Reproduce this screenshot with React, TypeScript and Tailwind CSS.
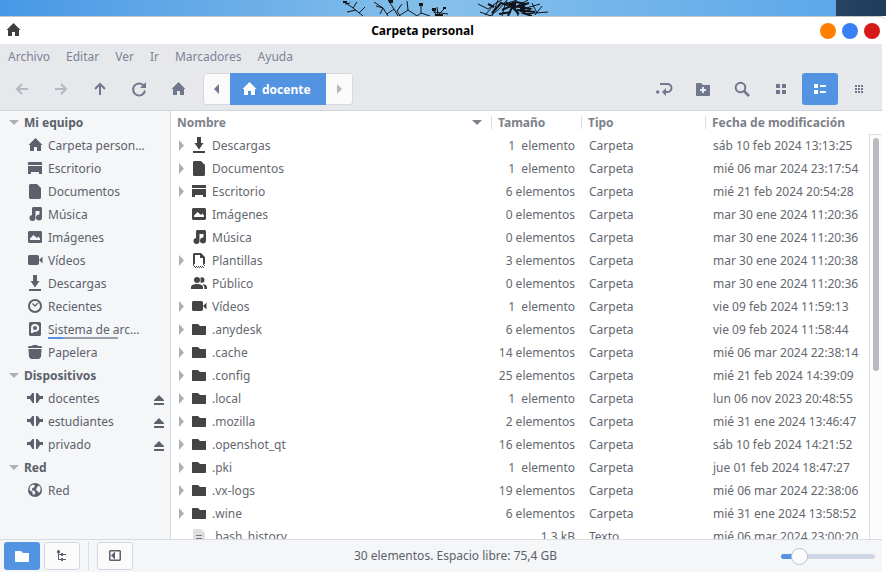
import React from "react";

type IconName =
  | "home" | "desktop" | "document" | "music" | "image" | "video" | "download"
  | "recent" | "disk" | "trash" | "share" | "globe" | "template" | "people"
  | "folder" | "text";

const shapes: Record<IconName, React.ReactNode> = {
  home: <path d="M8.500 1 15.500 8H14v6h-4v-4H7v4H3V8H1.500z" />,
  desktop: <path d="M1 2.500 1.500 2h13l.5.5V5H1zM1 6h14v8h-3v-2H4v2H1z" />,
  document: <path d="M3 1h7l4 4v10l-1 1H3l-1-1V2z" />,
  music: <path d="M5 2l1-1h8l1 1v9.500a3 3 0 1 1-2.500-3V5h-4v7a3 3 0 1 1-3.500-3z" />,
  image: <path fillRule="evenodd" d="M2 2h12l1 1v10l-1 1H2l-1-1V3zm1 9h10V9.500L11.500 7.500 10 9 6.500 6 3 9.500z" />,
  video: <path d="M2 3h8.500L12 4v8l-1.500 1H2l-1-1V4zM15.500 4.500v7L12 8z" />,
  download: <path d="M6 0h4v6h2.500L8 12.500 3.500 6H6zM2 14h12v2H2z" />,
  recent: (
    <>
      <circle cx="8" cy="8" r="6" fill="none" stroke="currentColor" strokeWidth="2" />
      <path d="M5.500 5.500 8 8l3-3" fill="none" stroke="currentColor" strokeWidth="1.300" />
    </>
  ),
  disk: <path fillRule="evenodd" d="M3 1h10l1 1v12l-1 1H3l-1-1V2zM8 3a4 4 0 0 0-4 4v5h2l1-1.200A4 4 0 1 0 8 3zm0 2a2 2 0 1 1 0 4 2 2 0 0 1 0-4z" />,
  trash: <path d="M1 3l1-1h3l1-1h4l1 1h3l1 1v1H1zM1.500 5h13L14 13l-2 2H4l-2-2z" />,
  share: <path d="M0 7h3l2.500-3H7v10H5.500L3 10H0zM9 4h1.500L13 7h3v3h-3l-2.500 4H9z" transform="translate(0 -1)" />,
  globe: (
    <>
      <circle cx="8" cy="8" r="7" />
      <path d="M3 4.500 6 2.500l2 1-1 2-2 1v2h2l1.500 2L7 13l-1.500-1v-2L2.500 8zM10 5l2-1.500 1.500 2v3L12 11l-1.500-2-1.500-1z" fill="#f5f6f8" />
    </>
  ),
  template: (
    <>
      <path fillRule="evenodd" d="M2 2l1-1h7l4 4v7h-2V6H9V3H4v9H2z" />
      <path d="M2 12.500h2M12 12.500h2M2 13.500h1M13 13.500h1M3 14.500h10M4 15.500h9" fill="none" stroke="currentColor" strokeDasharray="1 1" />
    </>
  ),
  people: (
    <>
      <circle cx="6" cy="5" r="3" />
      <path d="M9.500 2.500a2.800 2.800 0 1 1 0 5zM0 14v-2c0-2 3-3 6-3s6 1 6 3v2zM11.500 9c2.500.3 4.500 1.500 4.500 3v2h-2.500c0-2-.5-3.500-2-5z" />
    </>
  ),
  folder: <path d="M1.500 3H7l2 2h6v8.500l-.5.5h-13l-.5-.5v-10z" />,
  text: (
    <>
      <path d="M3 1h7l4 4v12H2V2z" fill="#e0e0e0" />
      <path d="M5 7h6v1H5zM5 10h6v1H5z" fill="#777" />
    </>
  ),
};

function Icon({ name }: { name: IconName }) {
  return (
    <svg className="h-[17px] w-4 shrink-0" viewBox="0 0 16 17" fill="currentColor" aria-hidden="true">
      {shapes[name]}
    </svg>
  );
}

interface Place {
  label: string;
  icon: IconName;
  eject?: boolean;
  usage?: boolean;
}

const sections: { title: string; places: Place[] }[] = [
  {
    title: "Mi equipo",
    places: [
      { label: "Carpeta person…", icon: "home" },
      { label: "Escritorio", icon: "desktop" },
      { label: "Documentos", icon: "document" },
      { label: "Música", icon: "music" },
      { label: "Imágenes", icon: "image" },
      { label: "Vídeos", icon: "video" },
      { label: "Descargas", icon: "download" },
      { label: "Recientes", icon: "recent" },
      { label: "Sistema de arc…", icon: "disk", usage: true },
      { label: "Papelera", icon: "trash" },
    ],
  },
  {
    title: "Dispositivos",
    places: [
      { label: "docentes", icon: "share", eject: true },
      { label: "estudiantes", icon: "share", eject: true },
      { label: "privado", icon: "share", eject: true },
    ],
  },
  { title: "Red", places: [{ label: "Red", icon: "globe" }] },
];

interface FileRow {
  name: string;
  icon: IconName;
  size: string;
  date: string;
  kind?: string;
  open?: boolean;
}

const files: FileRow[] = [
  { name: "Descargas", icon: "download", size: "1  elemento", date: "sáb 10 feb 2024 13:13:25", open: true },
  { name: "Documentos", icon: "document", size: "1  elemento", date: "mié 06 mar 2024 23:17:54", open: true },
  { name: "Escritorio", icon: "desktop", size: "6 elementos", date: "mié 21 feb 2024 20:54:28", open: true },
  { name: "Imágenes", icon: "image", size: "0 elementos", date: "mar 30 ene 2024 11:20:36" },
  { name: "Música", icon: "music", size: "0 elementos", date: "mar 30 ene 2024 11:20:36" },
  { name: "Plantillas", icon: "template", size: "3 elementos", date: "mar 30 ene 2024 11:20:38", open: true },
  { name: "Público", icon: "people", size: "0 elementos", date: "mar 30 ene 2024 11:20:36" },
  { name: "Vídeos", icon: "video", size: "1  elemento", date: "vie 09 feb 2024 11:59:13", open: true },
  { name: ".anydesk", icon: "folder", size: "6 elementos", date: "vie 09 feb 2024 11:58:44", open: true },
  { name: ".cache", icon: "folder", size: "14 elementos", date: "mié 06 mar 2024 22:38:14", open: true },
  { name: ".config", icon: "folder", size: "25 elementos", date: "mié 21 feb 2024 14:39:09", open: true },
  { name: ".local", icon: "folder", size: "1  elemento", date: "lun 06 nov 2023 20:48:55", open: true },
  { name: ".mozilla", icon: "folder", size: "2 elementos", date: "mié 31 ene 2024 13:46:47", open: true },
  { name: ".openshot_qt", icon: "folder", size: "16 elementos", date: "sáb 10 feb 2024 14:21:52", open: true },
  { name: ".pki", icon: "folder", size: "1  elemento", date: "jue 01 feb 2024 18:47:27", open: true },
  { name: ".vx-logs", icon: "folder", size: "19 elementos", date: "mié 06 mar 2024 22:38:06", open: true },
  { name: ".wine", icon: "folder", size: "6 elementos", date: "mié 31 ene 2024 13:58:52", open: true },
  { name: ".bash_history", icon: "text", size: "1,3 kB", date: "mié 06 mar 2024 23:00:20", kind: "Texto" },
];

function Wallpaper() {
  return (
    <div className="flex h-4 shrink-0 bg-linear-to-r from-[#4798e5] via-[#86c0ea] to-[#55a5eb]">
      <div className="flex flex-1 justify-center pl-[62px]">
        <svg className="h-4 w-[214px]" viewBox="0 0 214 16" fill="none" stroke="#10161c" aria-hidden="true">
          <path d="M1 1l10 7 10 8M3 4l5-1M11 8l4-6M14 10l-9 2M17 13l6-6M32 2l9 6 5 8M34 6l7 2-3 6M46 0l6 9 4 7M52 9l-7 5M60 4l-5 7 3 5M65 1l1 9-9 6M66 10l9 6M79 4v9l-4 3M79 13l9 3M90 9l5 7M96 15l7-7M92 12l14 2M96 16l-1-9M136 4l10 5 8-6 6-3M138 12l11 4M143 15l9-10M150 16l6-16M165 0l-9 10-8 6M160 16l3-12 12-4M176 16l-3-9 13-7M181 9l17-5M182 14l24-2M190 3l5 10M200 6l-7 9" />
          <path d="M150 13l9-10 6 2 9-3 10 2-6 3 10 2-7 4 9 3M160 10l9-4 8 8M166 16l6-13M157 14l12-2M146 4l6 3M170 8l17-5M175 10l18 2M164 2l6 5" strokeWidth="2" />
          <path d="M77 3h4v3h-4zM90 8h4v3h-4zM93 14h8v2h-8zM1 1h4v2H1zM101 7h3v2h-3zM47 0h4v3h-4zM169 3h5v5h-5zM178 6h5v6h-5z" fill="#10161c" stroke="none" />
        </svg>
      </div>
      <div className="w-[50px] bg-linear-to-r from-[#28435f] to-[#203c5d]" />
    </div>
  );
}

function TitleBar() {
  return (
    <header className="flex h-7 shrink-0 items-center rounded-tr-md border-t border-[#c5c7c9] bg-white pr-[6px] pl-[5px]">
      <span className="text-[#3f3f3f]"><Icon name="home" /></span>
      <h1 className="flex-1 pl-1 text-center font-bold text-black">Carpeta personal</h1>
      <div className="flex gap-[6px]">
        <button aria-label="Minimizar" className="size-4 rounded-full bg-[#ff8000]" />
        <button aria-label="Maximizar" className="size-4 rounded-full bg-[#3880f4]" />
        <button aria-label="Cerrar" className="size-4 rounded-full bg-[#d61a1a]" />
      </div>
    </header>
  );
}

function ToolButton({ label, children, active, dim }: { label: string; children: React.ReactNode; active?: boolean; dim?: boolean }) {
  const tone = active ? "bg-[#5294e2] text-white" : dim ? "text-[#b4b8c3]" : "text-[#70788d]";
  return (
    <button aria-label={label} disabled={dim} className={`flex h-8 w-9 items-center justify-center rounded-[3px] ${tone}`}>
      <svg className="size-4 overflow-visible" viewBox="0 0 16 16" fill="currentColor" aria-hidden="true">{children}</svg>
    </button>
  );
}

const line = { fill: "none", stroke: "currentColor", strokeWidth: 2 };

function ToolBar() {
  return (
    <div className="flex shrink-0 items-start gap-[3px] border-b border-[#d3d5dc] bg-[#e7e8eb] px-1 pt-1 pb-[5px]">
      <ToolButton label="Atrás" dim><path d="M14 8H3.500M8 3 3 8l5 5" {...line} /></ToolButton>
      <ToolButton label="Adelante" dim><path d="M2 8h10.500M8 3l5 5-5 5" {...line} /></ToolButton>
      <ToolButton label="Subir"><path d="M8 14V3.500M3 8l5-5 5 5" {...line} /></ToolButton>
      <ToolButton label="Recargar">
        <path d="M13 5A6 6 0 1 0 14 9.500" {...line} />
        <path d="M15 1v6H9z" />
      </ToolButton>
      <ToolButton label="Carpeta personal"><path d="M8.500 1 15.500 8H14v6h-4v-4H7v4H3V8H1.500z" /></ToolButton>
      <nav aria-label="Ruta" className="ml-1 flex h-8 overflow-hidden rounded-[3px] bg-[#fafafa]">
        <button aria-label="Ruta anterior" className="flex w-[27px] items-center justify-center rounded-l-[3px] border border-r-0 border-[#d6d8de] pr-px text-[#70788d]">
          <svg className="h-[10px] w-[5px]" viewBox="0 0 5 10" fill="currentColor"><path d="M5 0v10L0 5z" /></svg>
        </button>
        <button className="flex w-24 items-center gap-[5px] bg-[#5294e2] pl-[11px] font-bold text-white">
          <Icon name="home" />docente
        </button>
        <button aria-label="Ruta siguiente" className="flex w-[27px] items-center justify-center rounded-r-[3px] border border-l-0 border-[#d6d8de] text-[#b4b8c3]">
          <svg className="h-[10px] w-[5px]" viewBox="0 0 5 10" fill="currentColor"><path d="M0 0v10l5-5z" /></svg>
        </button>
      </nav>
      <div className="ml-auto flex gap-[3px] pr-px">
        <ToolButton label="Alternar ruta">
          <path d="M4 3h7.500a3.500 3.500 0 0 1 0 8H9" {...line} />
          <path d="M6 11l4-4v8z" />
          <circle cx="1.700" cy="11" r="1.700" />
        </ToolButton>
        <ToolButton label="Nueva carpeta">
          <path fillRule="evenodd" d="M1.500 2H6l2 2h7v10.500l-.5.5h-13l-.5-.5v-12zM7 6v2H5v2h2v2h2v-2h2V8H9V6z" />
        </ToolButton>
        <ToolButton label="Buscar"><circle cx="6.500" cy="6.500" r="4.800" {...line} /><path d="M10 10l5 5" {...line} strokeWidth={2.500} /></ToolButton>
        <ToolButton label="Vista de iconos"><path d="M3 3h4v4H3zM9 3h4v4H9zM3 9h4v4H3zM9 9h4v4H9z" /></ToolButton>
        <ToolButton label="Vista de lista" active><path d="M2 3h4v4H2zM8 4h6v2H8zM2 9h4v4H2zM8 10h6v2H8z" /></ToolButton>
        <ToolButton label="Vista compacta"><path d="M4 4h2v2H4zM7 4h2v2H7zM10 4h2v2h-2zM4 7h2v2H4zM7 7h2v2H7zM10 7h2v2h-2zM4 10h2v2H4zM7 10h2v2H7zM10 10h2v2h-2z" /></ToolButton>
      </div>
    </div>
  );
}

function SideBar() {
  return (
    <aside className="w-[171px] shrink-0 overflow-hidden border-r border-[#d9dbe2] bg-[#f5f6f8] text-[#5c616c]">
      {sections.map((section) => (
        <section key={section.title}>
          <h2 className="flex h-[23px] items-center gap-[5px] pl-[9px] font-bold">
            <svg className="h-[5px] w-[10px]" viewBox="0 0 10 5" fill="#aeb0b6"><path d="M0 0h10L5 5z" /></svg>
            {section.title}
          </h2>
          <ul>
            {section.places.map((place) => (
              <li key={place.label} className="relative flex h-[23px] items-center pr-[6px] pl-[27px]">
                <a href="#" className="flex items-center gap-[5px]">
                  <Icon name={place.icon} />{place.label}
                </a>
                {place.usage && (
                  <span className="absolute bottom-[2px] left-12 flex h-[2px] w-[70px] bg-[#99a0aa]">
                    <span className="w-[15px] bg-[#5294e2]" />
                  </span>
                )}
                {place.eject && (
                  <button aria-label={`Expulsar ${place.label}`} className="ml-auto pt-[3px]">
                    <svg className="h-[10px] w-[10px]" viewBox="0 0 10 10" fill="currentColor"><path d="M5 0l5 5v1H0V5zM0 8h10v2H0z" /></svg>
                  </button>
                )}
              </li>
            ))}
          </ul>
        </section>
      ))}
    </aside>
  );
}

function HeadCell({ children }: { children: React.ReactNode }) {
  return (
    <th className="p-0 text-left">
      <div className="flex h-[13px] items-center border-l border-[#dcdee3] pl-[6px]">{children}</div>
    </th>
  );
}

function FileList() {
  return (
    <main className="flex min-w-0 flex-1 overflow-hidden bg-white">
      <div className="min-w-0 flex-1 overflow-hidden">
        <table className="w-full table-fixed border-collapse whitespace-pre text-[#65686f]">
          <colgroup>
            <col />
            <col className="w-[90px]" />
            <col className="w-[124px]" />
            <col className="w-[164px]" />
          </colgroup>
          <thead className="text-[#7d818a]">
            <tr className="h-[23px]">
              <th className="p-0">
                <div className="flex items-center justify-between pr-[9px] pl-[6px]">
                  Nombre
                  <svg className="h-[5px] w-[10px]" viewBox="0 0 10 5" fill="currentColor"><path d="M0 0h10L5 5z" /></svg>
                </div>
              </th>
              <HeadCell>Tamaño</HeadCell>
              <HeadCell>Tipo</HeadCell>
              <HeadCell>Fecha de modificación</HeadCell>
            </tr>
          </thead>
          <tbody>
            {files.map((file) => (
              <tr key={file.name} className="h-[23px]">
                <td className="p-0">
                  <div className="flex h-[23px] items-center pl-2">
                    <span className="w-3">
                      {file.open && (
                        <svg className="h-[11px] w-[5px]" viewBox="0 0 5 11" fill="#aeaeb4"><path d="M0 0v11l5-5.500z" /></svg>
                      )}
                    </span>
                    <span className="mr-[5px] text-[#444]"><Icon name={file.icon} /></span>
                    {file.name}
                  </div>
                </td>
                <td className="p-0 pr-[6px] text-right">{file.size}</td>
                <td className="p-0 pl-2">{file.kind ?? "Carpeta"}</td>
                <td className="p-0 pl-2">{file.date}</td>
              </tr>
            ))}
          </tbody>
        </table>
      </div>
      <div className="mt-[23px] w-[13px] shrink-0 border-t border-l border-[#dcdee3] bg-[#fcfcfc] px-[3px] pt-[3px]">
        <div className="h-[58%] w-[6px] rounded-full bg-[#b8babf]" />
      </div>
    </main>
  );
}

function StatusBar() {
  const button = "flex h-7 w-9 items-center justify-center rounded-[3px]";
  return (
    <footer className="flex h-[33px] shrink-0 items-center border-t border-[#d9dbe2] bg-[#f5f6f8] px-1 text-[#5c616c]">
      <div className="flex items-center gap-1">
        <button aria-label="Lugares" className={`${button} bg-[#5294e2] text-white`}><Icon name="folder" /></button>
        <button aria-label="Árbol" className={`${button} border border-[#cfd6e6] bg-[#fbfbfc]`}>
          <svg className="size-4" viewBox="0 0 16 16" fill="currentColor"><path d="M3 3l1-1h1l1 1v2H5v1h2v1H5v4h2v1H4V5H3zM7 5h2v1h3v1H9v1H7zM7 10h2v1h3v1H9v1H7z" /></svg>
        </button>
      </div>
      <div className="mx-2 h-7 w-px bg-[#dcdee3]" />
      <button aria-label="Ocultar barra lateral" className={`${button} border border-[#cfd6e6] bg-[#fbfbfc]`}>
        <svg className="size-4" viewBox="0 0 16 16" fill="currentColor"><path fillRule="evenodd" d="M3 2h10l1 1v9l-1 1H3l-1-1V3zm.5 1.500v8h9v-8z" /><path d="M7 4.500v6l-3-3zM7 4h1v7H7z" /></svg>
      </button>
      <p className="flex-1 pr-[3px] pb-[2px] text-center">30 elementos. Espacio libre: 75,4 GB</p>
      <input
        type="range"
        aria-label="Ampliación"
        defaultValue={13}
        className="mr-[3px] h-[17px] w-[94px] appearance-none bg-transparent [&::-webkit-slider-runnable-track]:h-[5px] [&::-webkit-slider-runnable-track]:rounded-full [&::-webkit-slider-runnable-track]:bg-[linear-gradient(to_right,#5294e2_20%,#cfd6e6_20%)] [&::-webkit-slider-thumb]:-mt-[6px] [&::-webkit-slider-thumb]:size-[17px] [&::-webkit-slider-thumb]:appearance-none [&::-webkit-slider-thumb]:rounded-full [&::-webkit-slider-thumb]:border [&::-webkit-slider-thumb]:border-[#b7c0d3] [&::-webkit-slider-thumb]:bg-[#fbfbfc]"
      />
    </footer>
  );
}

export default function App() {
  return (
    <div className="flex h-screen flex-col overflow-hidden bg-white pb-px font-['Noto_Sans',sans-serif] text-[12px] leading-[17px]">
      <Wallpaper />
      <TitleBar />
      <div className="flex min-h-0 flex-1 flex-col pr-1">
        <nav aria-label="Menú" className="flex h-[25px] shrink-0 items-center gap-4 bg-[#e7e8eb] px-2 text-[#7c8396]">
          {["Archivo", "Editar", "Ver", "Ir", "Marcadores", "Ayuda"].map((item) => (
            <button key={item}>{item}</button>
          ))}
        </nav>
        <ToolBar />
        <div className="flex min-h-0 flex-1">
          <SideBar />
          <FileList />
        </div>
        <StatusBar />
      </div>
    </div>
  );
}
